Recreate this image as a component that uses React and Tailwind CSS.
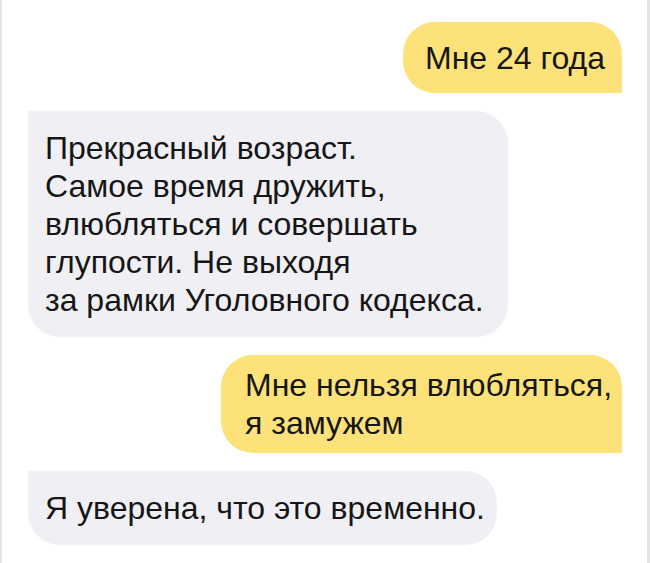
export default function App() {
  return (
    <div
      className="flex h-[563px] w-[650px] flex-col gap-[18px] border-l-2 border-r-[3px] border-[#e4e4e4] bg-white pl-[26px] pr-[25px] pt-[22px] text-[32px] leading-[38px] text-[#161616]"
      style={{ fontFamily: '"Liberation Sans", Arial, sans-serif' }}
    >
      <div className="w-[219px] self-end whitespace-nowrap rounded-[32px] rounded-br-none bg-[#fde27a] pb-[16px] pl-[22px] pt-[17px]">
        Мне 24 года
      </div>

      <div className="w-[480px] self-start whitespace-nowrap rounded-[32px] rounded-tl-none bg-[#efeff4] py-[18px] pl-[17px]">
        Прекрасный возраст.
        <br />
        Самое время дружить,
        <br />
        влюбляться и совершать
        <br />
        глупости. Не выходя
        <br />
        за рамки Уголовного кодекса.
      </div>

      <div className="w-[401px] self-end whitespace-nowrap rounded-[32px] rounded-br-none bg-[#fde27a] py-[11px] pl-[24px]">
        Мне нельзя влюбляться,
        <br />я замужем
      </div>

      <div className="w-[469px] self-start whitespace-nowrap rounded-[32px] rounded-tl-none bg-[#efeff4] py-[18px] pl-[17px]">
        Я уверена, что это временно.
      </div>
    </div>
  );
}
